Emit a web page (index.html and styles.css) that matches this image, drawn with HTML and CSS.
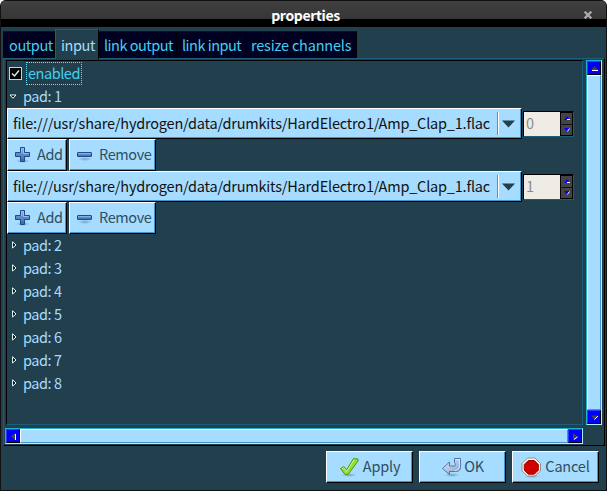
FILE: index.html
```
<!DOCTYPE html>
<html lang="en">
<head>
<meta charset="utf-8">
<title>properties</title>
<link rel="stylesheet" href="styles.css">
</head>
<body>
<svg class="defs" width="0" height="0">
  <defs>
    <linearGradient id="blue" x1="0" y1="0" x2="0" y2="1"><stop offset="0" stop-color="#83acdf"/><stop offset="1" stop-color="#3768ad"/></linearGradient>
    <linearGradient id="steel" x1="0" y1="0" x2="1" y2="1"><stop offset="0" stop-color="#e4edf8"/><stop offset="1" stop-color="#7f9fc9"/></linearGradient>
    <radialGradient id="shade"><stop offset="0" stop-color="#41698a" stop-opacity=".5"/><stop offset="1" stop-color="#41698a" stop-opacity="0"/></radialGradient>
    <symbol id="add" viewBox="0 0 16 16"><ellipse cx="8" cy="14" rx="7" ry="2" fill="url(#shade)"/><path d="M5.500 .5h4v5h5v4h-5v5h-4v-5h-5v-4h5z" fill="url(#blue)" stroke="#204a87" stroke-linejoin="round"/><path d="M6.500 6V1.500h2V6.500h5" fill="none" stroke="#a5c6ec" stroke-width=".8"/></symbol>
    <symbol id="remove" viewBox="0 0 16 16"><ellipse cx="8" cy="12" rx="7" ry="2" fill="url(#shade)"/><rect x=".5" y="5.500" width="14" height="4" rx=".5" fill="url(#blue)" stroke="#204a87"/><path d="M1.500 6.500h12" stroke="#91b5e2" stroke-width=".8"/></symbol>
    <symbol id="closed" viewBox="0 0 5 8"><path d="M.6 .8v6.200L4 4z" fill="#000" stroke="#e8ffff"/></symbol>
    <symbol id="up" viewBox="0 0 6 5"><path d="M0 4L3 0l3 4z" fill="#00f"/><path d="M3 3.500h3" stroke="#fff"/></symbol>
    <symbol id="down" viewBox="0 0 6 5"><path d="M0 0h6L3 4z" fill="#00f"/><path d="M3.300 3.500L5.500 .5" stroke="#fff"/></symbol>
  </defs>
</svg>
<div class="window">
  <header class="titlebar"><span>properties</span>
    <svg class="close" width="10" height="10" viewBox="0 0 10 10"><path d="M2.500 2.500l5 5M7.500 2.500l-5 5" stroke="#aaa" stroke-width="2.300" stroke-linecap="square"/></svg>
  </header>
  <nav class="tabs">
    <div class="tab t1">output</div><div class="tab active">input</div><div class="tab t3">link output</div><div class="tab t4">link input</div><div class="tab t5">resize channels</div>
  </nav>
  <main class="notebook">
    <section class="view">
      <div class="check"><span class="box"><svg width="9" height="9" viewBox="0 0 9 9"><path d="M1 4.500L3.500 7L8 1.500" fill="none" stroke="#d8e8e8" stroke-width="1.500"/></svg></span><span class="label">enabled</span></div>
      <div class="pad"><svg width="8" height="6" viewBox="0 0 8 6"><path d="M1 1h6L4 4.300z" fill="#000" stroke="#e8ffff"/></svg><span>pad: 1</span></div>
      <div class="line">
        <div class="combo"><span>file:///usr/share/hydrogen/data/drumkits/HardElectro1/Amp_Clap_1.flac</span><i></i><svg width="13" height="8" viewBox="0 0 13 8"><path d="M0 .5h13L6.500 7.500z" fill="#213f4d"/></svg></div>
        <div class="spin"><span>0</span><div class="arrows"><b><svg width="6" height="5"><use href="#up"/></svg></b><b><svg width="6" height="5"><use href="#down"/></svg></b></div></div>
      </div>
      <div class="actions"><div class="button add"><svg width="16" height="16"><use href="#add"/></svg><span>Add</span></div><div class="button remove"><svg width="16" height="16"><use href="#remove"/></svg><span>Remove</span></div></div>
      <div class="line">
        <div class="combo"><span>file:///usr/share/hydrogen/data/drumkits/HardElectro1/Amp_Clap_1.flac</span><i></i><svg width="13" height="8" viewBox="0 0 13 8"><path d="M0 .5h13L6.500 7.500z" fill="#213f4d"/></svg></div>
        <div class="spin"><span>1</span><div class="arrows"><b><svg width="6" height="5"><use href="#up"/></svg></b><b><svg width="6" height="5"><use href="#down"/></svg></b></div></div>
      </div>
      <div class="actions"><div class="button add"><svg width="16" height="16"><use href="#add"/></svg><span>Add</span></div><div class="button remove"><svg width="16" height="16"><use href="#remove"/></svg><span>Remove</span></div></div>
      <div class="pad shut"><svg width="5" height="8"><use href="#closed"/></svg><span>pad: 2</span></div>
      <div class="pad shut"><svg width="5" height="8"><use href="#closed"/></svg><span>pad: 3</span></div>
      <div class="pad shut"><svg width="5" height="8"><use href="#closed"/></svg><span>pad: 4</span></div>
      <div class="pad shut"><svg width="5" height="8"><use href="#closed"/></svg><span>pad: 5</span></div>
      <div class="pad shut"><svg width="5" height="8"><use href="#closed"/></svg><span>pad: 6</span></div>
      <div class="pad shut"><svg width="5" height="8"><use href="#closed"/></svg><span>pad: 7</span></div>
      <div class="pad shut"><svg width="5" height="8"><use href="#closed"/></svg><span>pad: 8</span></div>
    </section>
    <div class="scroll vertical">
      <div class="step"><svg width="7" height="5" viewBox="0 0 7 5"><path d="M0 4L3.500 0L7 4z" fill="#444"/><path d="M1 4.500h6" stroke="#fff"/></svg></div>
      <div class="thumb"></div>
      <div class="step"><svg width="7" height="5" viewBox="0 0 7 5"><path d="M0 .5h7L3.500 5z" fill="#444"/><path d="M3.500 4.500L7 1" stroke="#fff"/></svg></div>
    </div>
    <div class="scroll horizontal">
      <div class="step"><svg width="5" height="7" viewBox="0 0 5 7"><path d="M4 0v7L0 3.500z" fill="#444"/><path d="M4.500 1v6" stroke="#fff"/></svg></div>
      <div class="thumb"></div>
      <div class="step"><svg width="5" height="7" viewBox="0 0 5 7"><path d="M0 0v7l5-3.500z" fill="#444"/><path d="M1 6.500L4.500 4" stroke="#fff"/></svg></div>
    </div>
  </main>
  <footer class="dialog-actions">
    <div class="button"><svg width="21" height="20" viewBox="0 0 21 20"><ellipse cx="10" cy="18" rx="8" ry="2" fill="url(#shade)"/><path d="M1.500 11.500l3.500-2 2.500 3.500L14.500 1.500l4.500.5v2L9 17.500H6z" fill="#8fdf35" stroke="#4e9a06" stroke-linejoin="round"/><path d="M3 11.700l1.800-1 2.700 4L15.200 2.700" fill="none" stroke="#c9f58c"/></svg><span>Apply</span></div>
    <div class="button ok"><svg width="21" height="20" viewBox="0 0 21 20"><ellipse cx="11" cy="18" rx="8" ry="2" fill="url(#shade)"/><path d="M1.500 11.500L8.500 5v4h5c1.500 0 1-3 0-3.500V1.500h6v8c0 3.500-1.500 5-5 5h-6v3z" fill="url(#steel)" stroke="#5275a8" stroke-linejoin="round"/><path d="M14.500 2.500h4v6c0 3.500-2 5-5 5" fill="none" stroke="#f0f6ff" stroke-width=".8"/></svg><span>OK</span></div>
    <div class="button"><svg width="21" height="21" viewBox="0 0 21 21"><ellipse cx="11" cy="19.500" rx="8" ry="1.500" fill="url(#shade)"/><path d="M6.500 1h7.500l5.500 5.500V14L14 19H6.500L1 14V6.500z" fill="#f3f3ed" stroke="#8d918c"/><path d="M7.300 3.500h6l4 4v5.700l-4 4h-6l-4-4V7.500z" fill="#cf0000" stroke="#a40000"/></svg><span>Cancel</span></div>
  </footer>
</div>
</body>
</html>
```
FILE: styles.css
```
* { box-sizing: border-box; }
body { margin: 0; background: #fff; font: 14.500px/20px "Noto Sans CJK JP", "Noto Sans", sans-serif; letter-spacing: -.2px; overflow: hidden; }
svg { display: block; flex: none; }
.defs { position: absolute; }
.window { width: 607px; height: 491px; background: #213f4d; border: 1px solid #111; border-top: 0; border-radius: 6px 6px 0 0; overflow: hidden; }
.titlebar { height: 27px; padding-top: 5px; display: grid; grid-template-columns: 1fr; justify-items: center; background: linear-gradient(#111 0 1px, #404040 1px, #363636 19px, #000 19px); color: #fff; font-size: 14px; font-weight: bold; line-height: 20px; letter-spacing: -.35px; }
.titlebar > * { grid-area: 1 / 1; }
.titlebar > span { padding-left: 4px; }
.titlebar .close { justify-self: end; margin: 5px 13px 0 0; }
.tabs { display: flex; align-items: flex-start; height: 31px; padding: 2px 0 0 2px; }
.tab { height: 27px; margin-top: 2px; background: #000020; border-top: 1px solid #061826; border-right: 1px solid #000; color: #42cfec; line-height: 26px; padding-left: 6px; white-space: nowrap; letter-spacing: -.4px; }
.t1 { width: 52px; }
.tab.active { width: 44px; height: 30px; margin-top: 0; padding-left: 5px; background: #213f4d; border: 1px solid #1f5e78; border-bottom: 0; border-right-color: #000; color: #a6dcff; line-height: 29px; }
.t3 { width: 78px; padding-left: 5px; letter-spacing: -.5px; } .t4 { width: 69px; padding-left: 5px; letter-spacing: -.5px; } .t5 { width: 111px; padding-left: 5px; letter-spacing: -.2px; }
.notebook { width: 602px; height: 388px; margin: 0 0 0 2px; border: 1px solid; border-color: #1f5e78 #000 #000 #1f5e78; display: grid; grid-template-columns: 578px 16px; grid-template-rows: 365px 16px; column-gap: 3px; row-gap: 3px; padding: 1px 0 0 1px; }
.view { border: 1px solid; border-color: #000 #1f5e78 #1f5e78 #000; margin-left: 1px; }
.check, .pad { height: 23px; display: flex; align-items: center; color: #a6dcff; white-space: nowrap; }
.check { height: 24px; padding-left: 2px; color: #42cfec; letter-spacing: -.45px; }
.box { width: 13px; height: 13px; border: 1px solid #a6dcff; background: #000; padding: 1px; margin-right: 4px; }
.label { width: 56px; height: 23px; border: 1px dotted #5de3f5; line-height: 20px; padding-left: 1px; }
.pad { padding-left: 2px; letter-spacing: -.45px; }
.pad span { margin: 0 0 2px 6px; }
.pad.shut { padding-left: 5px; }
.pad.shut svg { position: relative; top: -1px; }
.line { height: 31px; display: flex; gap: 1px; }
.combo, .button { background: #a6dcff; border: 1px solid; border-color: #fff #000 #000 #fff; box-shadow: inset -1px -1px #4595cc; }
.combo { width: 515px; height: 31px; display: flex; align-items: center; padding-left: 5px; color: #111; }
.combo span { width: 484px; white-space: nowrap; padding-bottom: 2px; }
.combo i { width: 2px; height: 23px; background: linear-gradient(90deg, #4595cc 50%, #fff 50%); margin-right: 3px; }
.spin { width: 51px; height: 26px; margin-top: 3px; background: #efebe5; border: 1px solid; border-color: #000 #1f5e78 #1f5e78 #000; display: flex; color: #8b8b8b; line-height: 22px; }
.spin > span { width: 37px; padding-left: 2px; border-right: 1px solid #000; }
.arrows { width: 12px; background: #444; display: grid; grid-template-rows: 11px 11px; border: 1px solid #000; border-left: 0; }
.arrows b { display: grid; justify-content: center; align-content: start; padding-top: 3px; }
.arrows b + b { border-top: 1px solid #111; }
.actions { height: 32px; display: flex; gap: 2px; }
.button { height: 32px; display: flex; align-items: center; justify-content: center; color: #2f4f60; white-space: nowrap; letter-spacing: -.4px; }
.button span { padding-bottom: 2px; }
.add { width: 60px; justify-content: flex-start; padding-left: 7px; gap: 6px; }
.remove { width: 87px; justify-content: flex-start; padding-left: 7px; gap: 6px; }
.scroll { display: flex; border: 1px solid; border-color: #20b0c8 #a6f3ff #a6f3ff #20b0c8; background: #000; }
.vertical { flex-direction: column; }
.thumb { flex: 1; background: #a6dcff; border: 1px solid; border-color: #fff #4595cc #4595cc #fff; }
.step { width: 14px; height: 14px; background: #0000fa; border: 1px solid; border-color: #2441ff #000 #000 #2441ff; display: grid; place-items: center; }
.dialog-actions { display: flex; gap: 6px; justify-content: flex-end; padding: 5px 7px 0 0; }
.dialog-actions .button { width: 87px; gap: 3px; letter-spacing: -.2px; }
.dialog-actions .ok { gap: 2px; }
```
